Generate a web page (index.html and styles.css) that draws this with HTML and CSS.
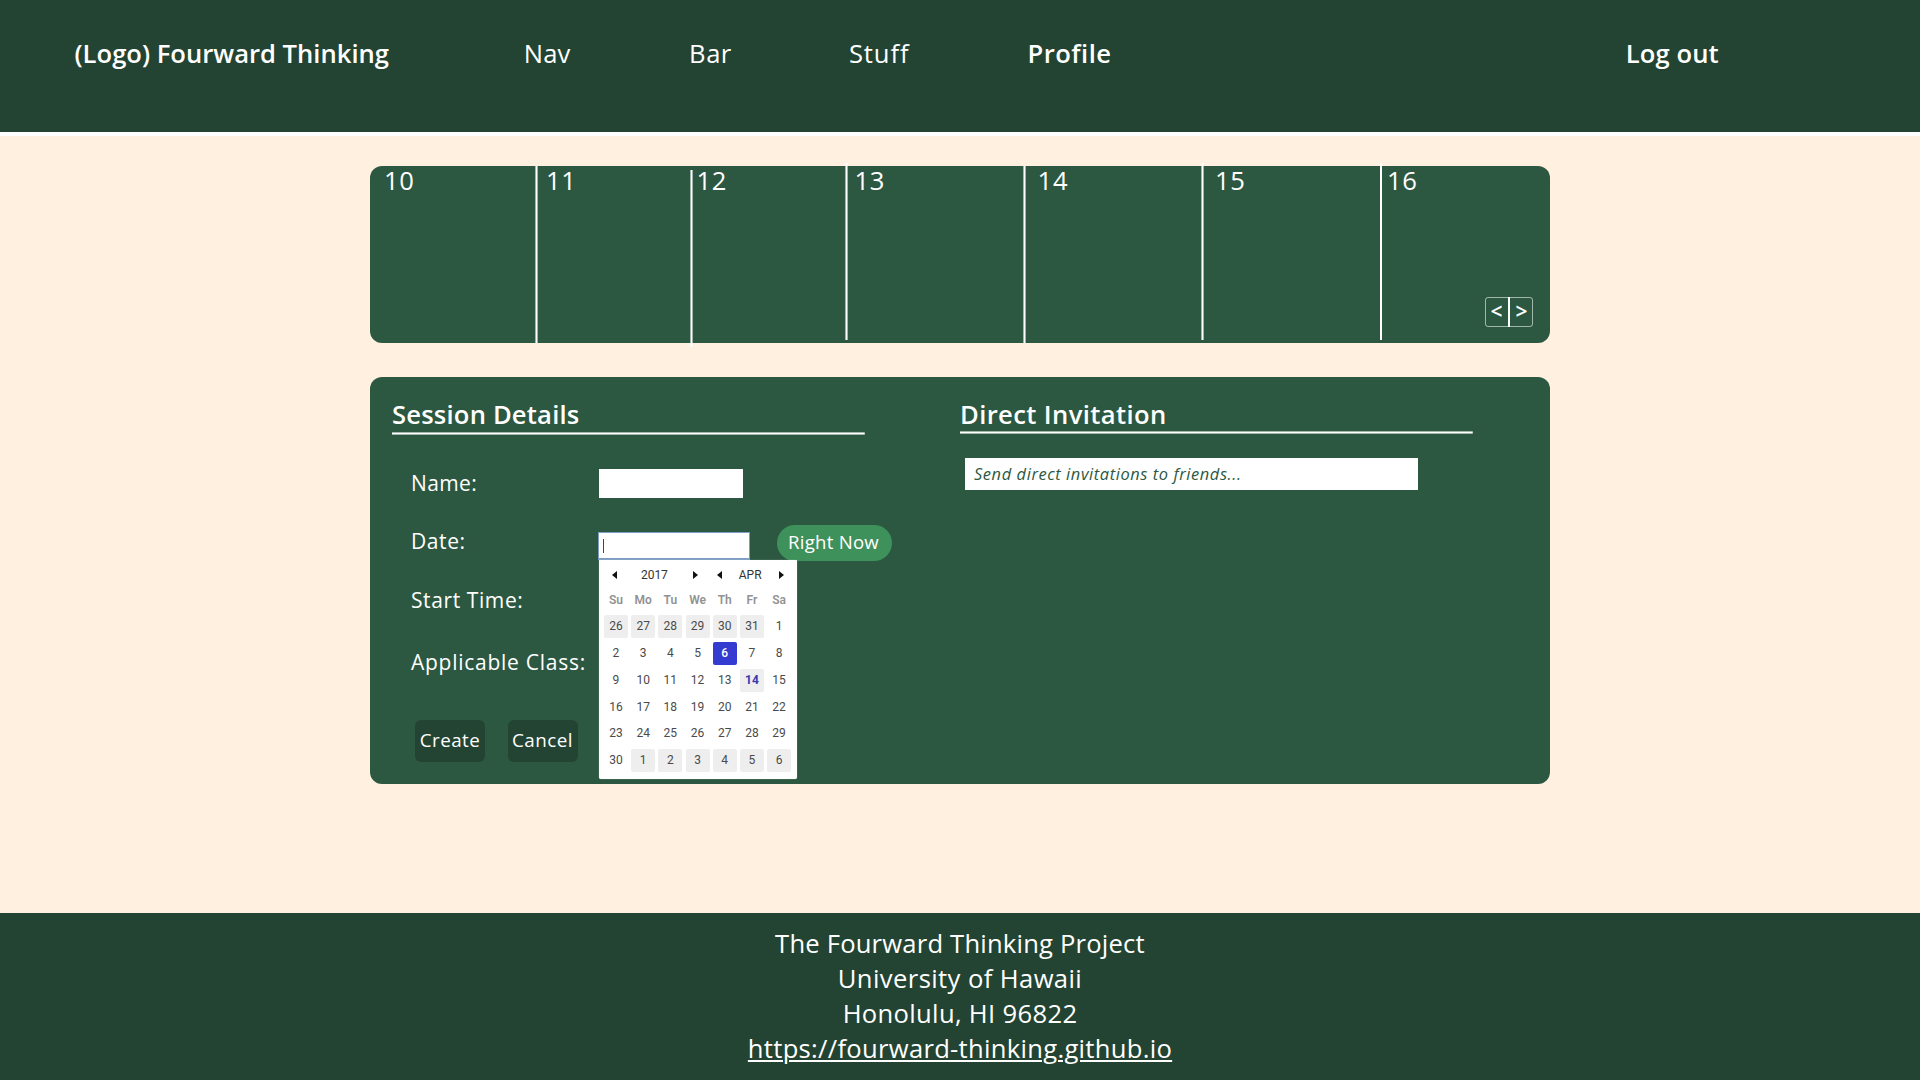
FILE: index.html
```html
<!DOCTYPE html>
<html lang="en">
<head>
<meta charset="utf-8">
<title>Fourward Thinking</title>
<link rel="stylesheet" href="styles.css">
</head>
<body>
<header class="topbar">
  <span class="brand">(Logo) Fourward Thinking</span>
  <a class="nav-nav">Nav</a>
  <a class="nav-bar">Bar</a>
  <a class="nav-stuff">Stuff</a>
  <a class="nav-profile">Profile</a>
  <a class="nav-logout">Log out</a>
</header>
<main class="main">
  <section class="week">
    <div class="day day-first">10</div>
    <div class="day day-11">11</div>
    <div class="day day-12 line-low">12</div>
    <div class="day day-13 line-high">13</div>
    <div class="day day-14">14</div>
    <div class="day day-15 line-high">15</div>
    <div class="day day-16 line-high line-solid">16
      <div class="pager"><span class="prev">&lt;</span><span class="next">&gt;</span></div>
    </div>
  </section>
  <section class="panel">
    <div class="details">
      <h2 class="heading heading-details">Session Details</h2>
      <div class="row row-name"><label class="label label-name">Name:</label><div class="name-input"></div></div>
      <div class="row row-date"><label class="label label-date">Date:</label>
        <div class="date-input"><span class="caret"></span>
          <div class="calendar">
            <div class="cal-head">
              <svg width="5" height="8"><path d="M5 0V8L0 4z"/></svg><span>2017</span><svg width="5" height="8"><path d="M0 0V8L5 4z"/></svg>
              <svg width="5" height="8"><path d="M5 0V8L0 4z"/></svg><span>APR</span><svg width="5" height="8"><path d="M0 0V8L5 4z"/></svg>
            </div>
            <div class="cal-week"><span>Su</span><span>Mo</span><span>Tu</span><span>We</span><span>Th</span><span>Fr</span><span>Sa</span></div>
            <div class="cal-days">
              <span class="out">26</span><span class="out">27</span><span class="out">28</span><span class="out">29</span><span class="out">30</span><span class="out">31</span><span>1</span>
              <span>2</span><span>3</span><span>4</span><span>5</span><span class="selected">6</span><span>7</span><span>8</span>
              <span>9</span><span>10</span><span>11</span><span>12</span><span>13</span><span class="out today">14</span><span>15</span>
              <span>16</span><span>17</span><span>18</span><span>19</span><span>20</span><span>21</span><span>22</span>
              <span>23</span><span>24</span><span>25</span><span>26</span><span>27</span><span>28</span><span>29</span>
              <span>30</span><span class="out">1</span><span class="out">2</span><span class="out">3</span><span class="out">4</span><span class="out">5</span><span class="out">6</span>
            </div>
          </div>
        </div>
        <div class="now">Right Now</div>
      </div>
      <div class="row row-start"><label class="label">Start Time:</label></div>
      <div class="row row-class"><label class="label label-class">Applicable Class:</label></div>
      <div class="actions"><div class="button">Create</div><div class="button">Cancel</div></div>
    </div>
    <div class="invite">
      <h2 class="heading heading-invite">Direct Invitation</h2>
      <div class="invite-input">Send direct invitations to friends...</div>
    </div>
  </section>
</main>
<footer class="footer">
  <div class="line-project">The Fourward Thinking Project</div>
  <div class="line-university">University of Hawaii</div>
  <div class="line-city">Honolulu, HI 96822</div>
  <div><a class="site">https://fourward-thinking.github.io</a></div>
</footer>
</body>
</html>
```
FILE: styles.css
```css
* { box-sizing: border-box; }
body {
  margin: 0;
  height: 1080px;
  display: flex;
  flex-direction: column;
  overflow: hidden;
  background: #fff0df;
  color: #fff;
  font: 400 25.6px/35px "Open Sans", sans-serif;
}

/* Top bar */
.topbar {
  height: 136px;
  border-bottom: 4px solid #fff;
  background: #234433;
  display: grid;
  grid-template-columns: 449.3px 165.3px 159.8px 178.7px 598.2px 1fr;
  padding: 36px 0 0 74.5px;
}
.brand, .nav-profile, .nav-logout { font-weight: 600; }
.nav-nav { letter-spacing: .1px; }
.nav-bar { letter-spacing: .5px; }
.nav-stuff { letter-spacing: .9px; }
.nav-profile { letter-spacing: .45px; }
.nav-logout { letter-spacing: .1px; }

.main { flex: 1; padding: 30px 370px 0; }

/* Week strip */
.week {
  height: 177px;
  border-radius: 12px;
  background: #2c5841;
  display: grid;
  grid-template-columns: 165px 155px 155px 178px 178px 179px 170px;
}
.day {
  position: relative;
  padding: 0 17px 16px 14px;
  line-height: 29px;
  letter-spacing: .7px;
  display: flex;
  flex-direction: column;
  justify-content: space-between;
}
.day::before {
  content: "";
  position: absolute;
  left: 0;
  top: 0;
  width: 3px;
  height: 177px;
  background: linear-gradient(90deg, #ffffff90 1px, #fff 1px 2px, #ffffff90 2px);
}
.day-first::before { display: none; }
.line-low::before { top: 4px; }
.line-high::before { top: -3px; }
.line-solid::before { width: 2px; background: #fff; }
.day-11 { padding-left: 11px; }
.day-12 { padding-left: 6.5px; }
.day-13 { padding-left: 9.5px; }
.day-14 { padding-left: 14.6px; }
.day-15 { padding-left: 14px; }
.day-16 { padding-left: 7px; }
.pager {
  align-self: flex-end;
  width: 48px;
  height: 30px;
  display: grid;
  grid-template-columns: 24px 22px;
  border: 1px solid #ffffff90;
  border-radius: 3px;
  font: 600 21px/27px "Open Sans", sans-serif;
  letter-spacing: 0;
  text-align: center;
}
.prev { border-right: 2px solid #fff; margin: -1px 0; padding: 1px 1px 0 0; }
.next { padding-left: 1px; }

/* Session panel */
.panel {
  height: 407px;
  margin-top: 34px;
  border-radius: 12px;
  background: #2c5841;
  display: grid;
  grid-template-columns: 590px 1fr;
}
.heading {
  margin: 0;
  padding-bottom: 2px;
  font: 600 25.6px/35px "Open Sans", sans-serif;
  background: linear-gradient(#ffffff90 1px, #fff 1px 2px, #ffffff90 2px) bottom / 100% 3px no-repeat;
}
.heading-details { width: 472.5px; margin: 20px 0 0 22px; padding-bottom: 3px; letter-spacing: .19px; }
.heading-invite { width: 512.5px; margin-top: 20px; letter-spacing: .38px; }

.row { display: flex; align-items: flex-start; padding-left: 41px; }
.row-name { height: 58px; margin-top: 34px; }
.row-date { height: 59px; }
.row-start { height: 62px; }
.row-class { height: 72px; }
.label {
  width: 187px;
  font-size: 21px;
  line-height: 28px;
  letter-spacing: .6px;
  white-space: nowrap;
}
.label-name { letter-spacing: .4px; }
.label-class { letter-spacing: .74px; }
.name-input { width: 144px; height: 29px; margin-left: 1px; background: #fff; }
.date-input {
  position: relative;
  width: 152px;
  height: 28px;
  margin-top: 5px;
  border: 1px solid #7d9dc4;
  border-bottom-width: 2px;
  background: #fff;
}
.caret { display: block; width: 1px; height: 14px; margin: 6px 0 0 4px; background: #444; }
.now {
  width: 115px;
  height: 36px;
  margin: -2px 0 0 27px;
  padding: 4px 2px 0 0;
  border-radius: 18px;
  background: #3f915b;
  font-size: 18.6px;
  line-height: 25px;
  letter-spacing: .25px;
  text-align: center;
}
.actions { display: flex; gap: 22.5px; padding-left: 45px; }
.button {
  width: 70px;
  height: 42px;
  padding-top: 7px;
  border-radius: 6px;
  background: #234433;
  font-size: 18.8px;
  line-height: 26px;
  letter-spacing: .5px;
  text-align: center;
}

/* Date picker */
.calendar {
  position: absolute;
  z-index: 1;
  left: 0;
  top: 27px;
  width: 198px;
  height: 219px;
  padding-left: 3.4px;
  border-radius: 0 1px 2px 2px;
  background: #fff;
  box-shadow: 0 0 1px #c8d4cc;
  color: #4a4a4a;
  font: 400 12px/24px Roboto, sans-serif;
  text-align: center;
}
.cal-head {
  height: 28px;
  display: grid;
  grid-template-columns: 24px 56px 26px 23px 37.5px 24.5px;
  align-items: center;
  justify-items: center;
  padding-top: 2.5px;
  color: #333;
}
.cal-head svg { fill: #111; }
.cal-week, .cal-days { display: grid; grid-template-columns: repeat(7, 27.2px); justify-items: center; }
.cal-week { color: #929292; font-weight: 600; }
.cal-days { grid-auto-rows: 26.8px; align-items: center; margin-top: 1.4px; }
.cal-days span { width: 24px; height: 23px; border-radius: 2px; line-height: 23px; }
.cal-days .out { background: #eee; }
.cal-days .selected { background: #333bd0; color: #fff; font-weight: 500; }
.cal-days .today { color: #3c38b0; font-weight: 700; }

/* Invitations */
.invite-input {
  width: 453px;
  height: 32px;
  margin: 24px 0 0 5px;
  padding: 5px 0 0 9px;
  background: #fff;
  color: #2c5841;
  font: italic 400 16.4px/22px "Open Sans", sans-serif;
  letter-spacing: .6px;
}

/* Footer */
.footer {
  height: 167px;
  padding-top: 13px;
  background: #234433;
  text-align: center;
}
.line-project { letter-spacing: .2px; }
.line-university { letter-spacing: .4px; }
.line-city { letter-spacing: .33px; }
.site {
  letter-spacing: .29px;
  text-decoration: underline;
  text-decoration-thickness: 2px;
  text-underline-offset: 2px;
}
```
